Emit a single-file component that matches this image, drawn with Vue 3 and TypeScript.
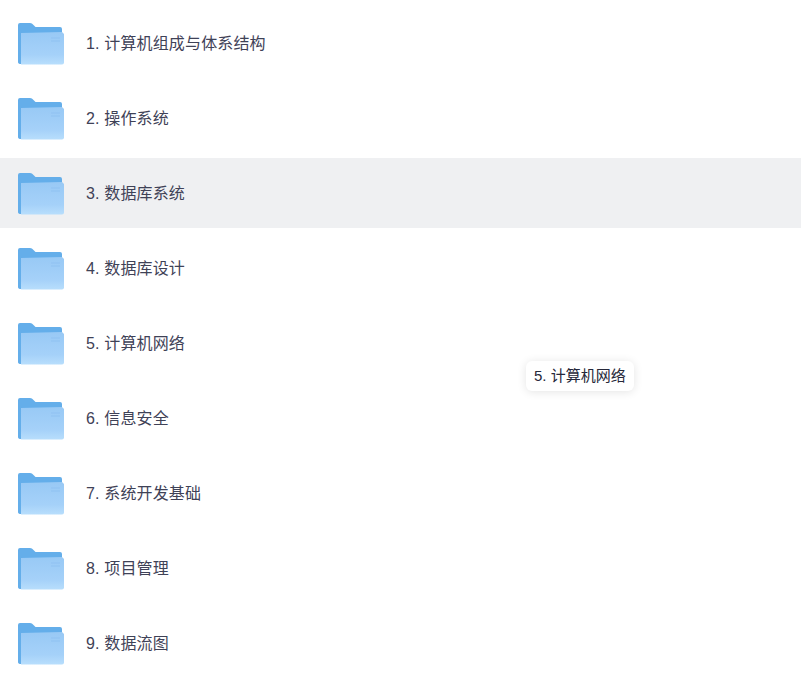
<template>
  <div class="file-list">
    <div
      v-for="(name, index) in folders"
      :key="name"
      class="file-row"
      :class="{ active: index === activeIndex }"
    >
      <svg class="folder-icon" viewBox="0 0 46 42" width="46" height="42">
        <defs>
          <linearGradient :id="'front' + index" x1="0" y1="0" x2="0" y2="1">
            <stop offset="0" stop-color="#98c9f5" />
            <stop offset="0.7" stop-color="#a5d1f9" />
            <stop offset="1" stop-color="#b8defc" />
          </linearGradient>
        </defs>
        <!-- 文件夹背面和标签 -->
        <path d="M0 2 Q0 0 2 0 H12 Q14 0 15.5 2 L17.500 4 H42 Q44 4 44 6 V12 H3 V41 Q0 41 0 39 Z" fill="#64aeea" />
        <!-- 正面 -->
        <path d="M3 10 L44 9 L46 11 V39.500 Q46 41.500 44 41.500 H3 Z" :fill="'url(#front' + index + ')'" />
        <rect x="33" y="14.500" width="9" height="1" fill="#8fc2f1" />
        <rect x="33" y="17.500" width="9" height="1" fill="#8fc2f1" />
      </svg>
      <span class="file-name">{{ name }}</span>
    </div>
    <div class="name-tip">5. 计算机网络</div>
  </div>
</template>

<script setup lang="ts">
const folders: string[] = [
  '1. 计算机组成与体系结构',
  '2. 操作系统',
  '3. 数据库系统',
  '4. 数据库设计',
  '5. 计算机网络',
  '6. 信息安全',
  '7. 系统开发基础',
  '8. 项目管理',
  '9. 数据流图',
]

// 当前高亮的行
const activeIndex = 2
</script>

<style scoped>
.file-list {
  position: relative;
  height: 695px;
  overflow: hidden;
  padding-top: 8px;
  box-sizing: border-box;
  display: flex;
  flex-direction: column;
  gap: 5px;
  background-color: #fff;
  font-family: "Liberation Sans", "Noto Sans CJK SC", sans-serif;
}

.file-row {
  flex: 0 0 70px;
  display: flex;
  align-items: center;
  padding-left: 18px;
  gap: 22px;
}

.file-row.active {
  background-color: #eff0f2;
}

.folder-icon {
  flex-shrink: 0;
  margin-top: 1px;
}

.file-name {
  font-size: 16px;
  line-height: 20px;
  letter-spacing: 0.15px;
  margin-top: 2px;
  color: #3f4257;
}

.name-tip {
  position: absolute;
  left: 526px;
  top: 361px;
  width: 108px;
  box-sizing: border-box;
  height: 30px;
  line-height: 30px;
  padding: 0 8px;
  font-size: 15px;
  color: #26283a;
  background-color: #fff;
  border-radius: 6px;
  box-shadow: 0 1px 10px rgba(0, 0, 0, 0.11);
}
</style>
